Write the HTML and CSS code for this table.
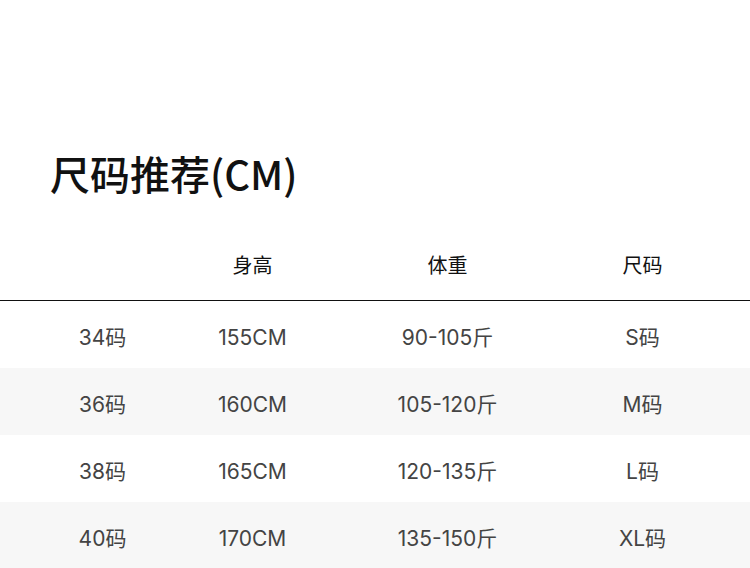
FILE: index.html
```html
<!DOCTYPE html>
<html lang="zh-CN">
<head>
<meta charset="utf-8">
<link rel="stylesheet" href="styles.css">
</head>
<body>
<div class="page">
  <h1 class="title">尺码推荐(CM)</h1>
  <div class="table">
    <div class="row head">
      <div class="cell"></div>
      <div class="cell">身高</div>
      <div class="cell">体重</div>
      <div class="cell">尺码</div>
    </div>
    <div class="row">
      <div class="cell">34码</div>
      <div class="cell">155CM</div>
      <div class="cell">90-105斤</div>
      <div class="cell">S码</div>
    </div>
    <div class="row alt">
      <div class="cell">36码</div>
      <div class="cell">160CM</div>
      <div class="cell">105-120斤</div>
      <div class="cell">M码</div>
    </div>
    <div class="row">
      <div class="cell">38码</div>
      <div class="cell">165CM</div>
      <div class="cell">120-135斤</div>
      <div class="cell">L码</div>
    </div>
    <div class="row alt">
      <div class="cell">40码</div>
      <div class="cell">170CM</div>
      <div class="cell">135-150斤</div>
      <div class="cell">XL码</div>
    </div>
  </div>
</div>
</body>
</html>
```

FILE: styles.css
```css
html, body {
  margin: 0;
  padding: 0;
  background: #ffffff;
}
.page {
  width: 750px;
  height: 568px;
  overflow: hidden;
  font-family: Inter, "Noto Sans CJK SC", sans-serif;
}
.title {
  margin: 0;
  padding: 149px 0 0 50px;
  font-family: "Noto Sans CJK SC", sans-serif;
  font-size: 40px;
  line-height: 48px;
  font-weight: 500;
  color: #111;
}
.table {
  margin-top: 35px;
}
.row {
  display: grid;
  grid-template-columns: 105px 195px 195px 195px;
  padding-left: 50px;
  height: 67px;
  align-items: center;
  font-size: 21px;
  color: #444;
}
.row.head {
  height: 68px;
  border-bottom: 1px solid #111;
  color: #111;
  font-size: 20px;
}
.row.alt {
  background: #f7f7f7;
}
.cell {
  text-align: center;
  line-height: 28px;
  padding-top: 6px;
}
.head .cell {
  padding-top: 0;
}
```
